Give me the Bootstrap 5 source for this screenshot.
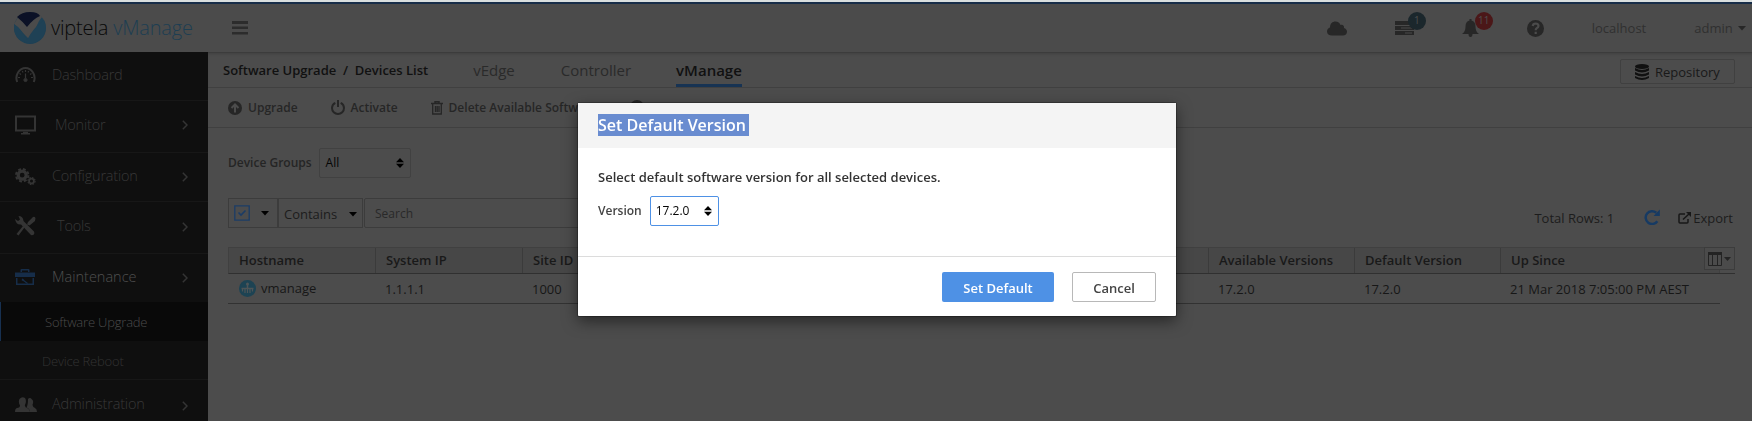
<!DOCTYPE html>
<html lang="en">
<head>
<meta charset="utf-8">
<title>viptela vManage</title>
<link href="https://cdn.jsdelivr.net/npm/bootstrap@5.3.0/dist/css/bootstrap.min.css" rel="stylesheet">
<script src="https://cdn.jsdelivr.net/npm/bootstrap@5.3.0/dist/js/bootstrap.bundle.min.js"></script>
<style>
body{font-family:"Open Sans","Noto Sans",sans-serif;font-size:13px;line-height:20px;background:#4c4c4c;color:#1c1c1c;height:421px;overflow:hidden}
svg{display:block;flex:none}
.topline{height:4px;background:#172d48;border-top:2px solid #d9dede}
.masthead{height:48px;background:#4b4b4b;padding-left:14px;color:#2a2a2a}
.wordmark{font-size:20px;font-weight:300;letter-spacing:-.18px;line-height:28px;margin-left:5px;color:#080808}
.wordmark span{color:#1d3e52}
.burger{margin-left:39px}
.bubble{position:absolute;width:18px;height:18px;border-radius:50%;color:#4e4e4e;font-size:10px;line-height:17px;text-align:center;left:13px}
.usertext{font-size:13px;color:#303030}
.sidebar{width:208px;height:369px;background:#0f0f0f;flex:none;color:#383838;font-weight:300;font-size:14.5px;letter-spacing:-.2px}
.entry{border-bottom:1px solid #171717;padding-left:15px}
.entry .label{margin-left:16px}
.entry .chev{margin-left:auto;margin-right:20px}
.sub{font-size:13px;height:39px;padding:1px 0 0 42px;color:#333}
.sub.current{background:#090909;color:#4b4b4b;border-left:1px solid #173050;padding-left:44px}
.crumbs{height:36px;border-top:1px solid #3c3c3c;border-bottom:1px solid #404040;padding-left:15px;box-shadow:inset 0 2px 3px -1px #404040}
.crumb{font-weight:600;color:#111;white-space:pre}
.tabitem{font-size:15px;color:#2a2a2a;height:34px;line-height:35px}
.tabitem.on{font-weight:600;color:#111;border-bottom:3px solid #173353}
.repo{height:25px;width:115px;border:1px solid #404040;border-radius:2px;font-size:13px;color:#191919;padding:2px 0 0 14px;gap:6px}
.tools{height:40px;border-bottom:1px solid #404040;padding-left:20px;font-weight:600;font-size:12px;color:#262626}
.pick{border:1px solid #414141;border-radius:2px;height:30px;color:#050505}
.searchbar{height:30px}
.searchbar>div{border:1px solid #3c3c3c;height:30px}
.grid-table{width:1492px;margin-left:20px}
.heads{height:27px;border:1px solid #404040;border-bottom:1px solid #303030;background:#474747;font-weight:600;color:#191919;font-size:13px}
.heads>div,.vals>div{padding-left:10px;flex:none;white-space:nowrap}
.heads>div{border-right:1px solid #3b3b3b;height:25px;line-height:25px}
.vals{height:30px;border-bottom:1px solid #323232;line-height:31px;color:#171717;font-size:13px}
.colmenu{position:absolute;right:-16px;top:-1px;width:31px;height:23px;background:#4b4b4b;border:1px solid #3c3c3c;padding-left:3px}
.headrule{position:absolute;right:-16px;bottom:-1px;width:16px;height:1px;background:#303030}
.dlg{position:fixed;left:0;top:0;width:100%;height:100%}
.dlg .modal-dialog{width:598px;max-width:598px;margin:103px 0 0 578px}
.dlg .modal-content{height:213px;border:0;border-radius:1px;background:#fff;box-shadow:0 0 0 1px rgba(0,0,0,.25),0 5px 15px rgba(0,0,0,.5)}
.dlg .modal-header{height:45px;background:#f4f4f4;border:0;border-radius:0;padding:0 20px 1px}
.dlg .modal-title{font-size:16px;font-weight:600;line-height:22px;height:22px;background:#698cd0;color:#fff;width:151px;white-space:nowrap}
.dlg .modal-body{padding:18px 20px 0;color:#333}
.dlg .modal-footer{height:60px;border-top:1px solid #dcdcdc;padding:1px 20px 0 0;gap:18px}
.dlg .modal-footer .btn{margin:0;height:30px;border-radius:2px;font-size:13px;line-height:20px;font-weight:600;padding:1px 0 0}
.go{width:112px;background:#4e91e5;color:#fff}
.stop{width:84px;border:1px solid #b8b8b8;color:#444}
</style>
</head>
<body>
<div class="topline"></div>
<header class="masthead d-flex align-items-center">
  <svg width="32" height="32" viewBox="0 0 32 32"><circle cx="16" cy="16" r="16" fill="#1f4155"/><path d="M3 7Q8 0 16 0T28 5L25 9 16 28Q9 21 0 12Z" fill="#4b4b4b"/><path d="M3 5Q8 0 16 0T26 4Q19 7 13 15Q8 9 3 5Z" fill="#0b1126"/><path d="M0 12Q7 16 13 28Q19 16 30 8Q34 18 28 26Q17 36 5 27Q-1 21 0 12Z" fill="#1f4155"/></svg>
  <div class="wordmark">viptela <span>vManage</span></div>
  <svg class="burger" width="16" height="14" fill="#2c2c2c"><path d="M0 0h16v3H0zM0 5.500h16v2.600H0zM0 11h16v2.600H0z"/></svg>
  <svg style="margin-left:1079px" width="20" height="15" viewBox="0 0 20 15" fill="#272727"><path d="M5 14.500C2 14.500 0 13 0 10.500 0 8.500 1.300 7 3 6.500 3 2.500 5.500.5 8.500.5c2.500 0 4.300 1.200 5 3.500 2.300-.7 4 1 3.500 3 1.800.5 3 2 3 3.800 0 2.200-1.700 3.700-4 3.700z"/></svg>
  <div class="position-relative" style="margin-left:48px"><svg width="19" height="14" fill="#272727" fill-rule="evenodd"><path d="M0 0h19v4H0zM0 5h19v4H0zm6 1.500v1h11v-1zM0 10h19v4H0zm10 1.500v1h7v-1z"/></svg><span class="bubble" style="background:#1b272c;top:-9px">1</span></div>
  <div class="position-relative" style="margin-left:48px"><svg width="17" height="18" viewBox="0 0 17 18" fill="#272727"><path d="M7.500 0h2v1.500Q13.500 2.500 13.500 7.500 13.500 13 17 15H10.500Q10.500 18 8.500 18T6.500 15H0Q3.500 13 3.500 7.500 3.500 2.500 7.500 1.500z"/></svg><span class="bubble" style="background:#4b1718;top:-7px">11</span></div>
  <svg style="margin-left:48px" width="17" height="17" viewBox="0 0 17 17"><circle cx="8.500" cy="8.500" r="8.500" fill="#272727"/><path d="M5.700 6Q6 3.500 8.700 3.500 11.500 3.700 11.500 6 11.500 7.300 9.700 8.200 8.700 8.800 8.700 10.200M8.700 11.700V13.900" fill="none" stroke="#4b4b4b" stroke-width="2.200"/></svg>
  <span class="usertext" style="margin-left:48px">localhost</span>
  <span class="usertext" style="margin-left:48px">admin</span>
  <svg style="margin-left:5px" width="8" height="5"><path d="M0 0h8L4 4.500z" fill="#272727"/></svg>
</header>
<div class="d-flex">
<nav class="sidebar">
  <div class="entry d-flex align-items-center" style="height:49px;padding-bottom:3px"><svg width="21" height="16" viewBox="0 0 21 16" fill="none" stroke="#343434"><path d="M2.200 15Q.2 10 3 5.500 6 1 10.500 1T18 5.500Q20.800 10 18.800 15" stroke-width="2"/><path d="M5 10.500h-2M6 7.500L4.500 6.500M8 5.500L7.300 4M10.500 5V3M13 5.500L13.700 4M15 7.500l1.500-1M16 10.500h2" stroke-width="1.200"/><path d="M10.500 6.500v5" stroke-width="1.300"/><circle cx="10.500" cy="13" r="1.600" fill="#343434"/></svg><span class="label">Dashboard</span></div>
  <div class="entry d-flex align-items-center" style="height:52px;padding-bottom:4px"><svg width="21" height="20" fill="none" stroke="#343434"><path d="M1 1.500h19v14H1z" stroke-width="2"/><path d="M6 18.800h9M8 17.500h5" stroke-width="1.500"/></svg><span class="label" style="margin-left:19px">Monitor</span><svg class="chev" width="6" height="10"><path d="M.8.8L5 5 .8 9.200" fill="none" stroke="#343434" stroke-width="1.500"/></svg></div>
  <div class="entry d-flex align-items-center" style="height:49px"><svg width="21" height="18" viewBox="0 0 21 18" fill="none" stroke="#343434"><circle cx="7.200" cy="7.200" r="4" stroke-width="3.200"/><circle cx="7.200" cy="7.200" r="6.200" stroke-width="2" stroke-dasharray="2.870 2"/><circle cx="16.500" cy="13" r="2.400" stroke-width="1.800"/><circle cx="16.500" cy="13" r="3.600" stroke-width="1.100" stroke-dasharray="1.600 1.227"/></svg><span class="label" style="margin-top:-3px">Configuration</span><svg class="chev" width="6" height="10"><path d="M.8.8L5 5 .8 9.200" fill="none" stroke="#343434" stroke-width="1.500"/></svg></div>
  <div class="entry d-flex align-items-center" style="height:52px;padding-bottom:4px"><svg width="21" height="20" viewBox="0 0 21 20" fill="#343434"><path d="M0 3L3 5 5 3.500 3.500 0Q8 0 8.500 5L19 15.500Q20 18 18 19 16 19.500 15.500 18.500L6 8.500Q1 9 0 3z"/><path d="M13 6L18 1Q19.500 0 20.500 2L20 5 14.500 9.500 12 8.500zM9.500 11.500L3.500 19.500 1.500 18 8 10z"/></svg><span class="label" style="margin-left:21px">Tools</span><svg class="chev" width="6" height="10" style="margin-top:3px"><path d="M.8.8L5 5 .8 9.200" fill="none" stroke="#343434" stroke-width="1.500"/></svg></div>
  <div class="d-flex align-items-center" style="height:48px;padding:0 0 2px 15px;color:#505050"><svg width="20" height="16" viewBox="0 0 20 16" fill="#162d49"><path d="M5.500 3V1q0-1 1-1h7q1 0 1 1v2h-1.500V1.500h-6V3zM0 3.500h20V8H0z"/><path d="M1 9h1.500v5.500h15V9H19v7H1z"/><path d="M7 9.500l1.500.5.500 1 4 3-.8.9-4-2.900-1.500-.5z"/></svg><span style="margin-left:17px;letter-spacing:0">Maintenance</span><svg style="margin:2px 20px 0 auto" width="6" height="10"><path d="M.8.8L5 5 .8 9.200" fill="none" stroke="#343434" stroke-width="1.500"/></svg></div>
  <div class="sub current d-flex align-items-center">Software Upgrade</div>
  <div class="sub d-flex align-items-center" style="border-bottom:1px solid #171717">Device Reboot</div>
  <div class="d-flex align-items-center" style="height:48px;padding-left:15px"><svg width="22" height="15" viewBox="0 0 22 15" fill="#343434"><path d="M13 2Q15 0 17 2.500 19 3.500 17.500 8 18 10.500 20 11 22 12 22 15H15Q15 12 11.500 10.500 13 8 13 2z"/><path d="M0 15Q0 11.500 2 11 5 10.500 5 8.500 3 5 4.500 2 7-1 10 1 12 4 9.800 8.500 10 10.500 13 11.500 15 12.500 15 15z"/></svg><span style="margin-left:15px">Administration</span><svg style="margin:3px 20px 0 auto" width="6" height="10"><path d="M.8.8L5 5 .8 9.200" fill="none" stroke="#343434" stroke-width="1.500"/></svg></div>
</nav>
<main class="flex-grow-1">
  <div class="crumbs d-flex align-items-center">
    <span class="crumb">Software Upgrade  /  Devices List</span>
    <span class="tabitem" style="margin-left:45px">vEdge</span>
    <span class="tabitem" style="margin-left:46px">Controller</span>
    <span class="tabitem on" style="margin-left:45px">vManage</span>
    <div class="repo d-flex align-items-center ms-auto" style="margin-right:17px;margin-top:2px"><svg width="14" height="16" viewBox="0 0 14 16" fill="#111"><ellipse cx="7" cy="2.500" rx="7" ry="2.500"/><path d="M0 4Q7 8 14 4v2.500q-7 4-14 0zM0 8q7 4 14 0v2.500q-7 4-14 0zM0 12q7 4 14 0v2q-7 4-14 0z"/></svg><span>Repository</span></div>
  </div>
  <div class="tools d-flex align-items-center">
    <svg width="14" height="14" viewBox="0 0 14 14"><circle cx="7" cy="7" r="7" fill="#262626"/><path d="M7 11.500V4M3.500 7L7 3.500 10.500 7" fill="none" stroke="#4c4c4c" stroke-width="2"/></svg><span style="margin-left:6px">Upgrade</span>
    <svg style="margin-left:33px" width="14" height="15" viewBox="0 0 14 15" fill="none" stroke="#262626" stroke-width="2"><path d="M4.300 2.800Q1 4.500 1 8a6 6 0 0 0 12 0Q13 4.500 9.700 2.800M7 0v7"/></svg><span style="margin-left:6px">Activate</span>
    <svg style="margin-left:33px" width="12" height="14" viewBox="0 0 12 14" fill="none" stroke="#262626"><path d="M0 2.500h12M4 2V.8h4V2" stroke-width="1.500"/><path d="M1.700 3v10h8.600V3M4.500 5v6M6.200 5v6M8 5v6" stroke-width="1.300"/></svg><span style="margin-left:6px">Delete Available Software</span>
    <svg style="margin-left:33px;margin-top:-2px" width="14" height="14"><circle cx="7" cy="7" r="7" fill="#262626"/></svg>
  </div>
  <div class="d-flex align-items-center" style="padding:20px 0 0 20px;height:50px;font-size:12px;font-weight:600;color:#252525">
    <span>Device Groups</span>
    <div class="pick d-flex align-items-center justify-content-between fw-normal" style="width:92px;margin-left:7px;padding:0 6px"><span>All</span><svg width="8" height="10"><path d="M4 0l4 4.300H0zM4 10l4-4.300H0z"/></svg></div>
  </div>
  <div class="d-flex align-items-start" style="margin:20px 0 0 20px;height:34px">
    <div class="searchbar d-flex">
      <div class="d-flex align-items-center" style="width:50px;padding-left:5px;padding-right:8px"><svg width="16" height="16" fill="none" stroke="#1b3c66"><path d="M.8.800h14.400v14.400H.8z" stroke-width="1.300"/><path d="M4.500 7.500L7 10 11.500 5.500" stroke-width="1.600"/></svg><svg class="ms-auto" width="8" height="5"><path d="M0 0h8L4 4.500z"/></svg></div>
      <div class="d-flex align-items-center" style="width:85px;padding:2px 5px 0;font-size:13px"><span>Contains</span><svg class="ms-auto" width="8" height="5"><path d="M0 0h8L4 4.500z"/></svg></div>
      <div style="width:690px;padding:5px 0 0 10px;font-size:12px;margin-left:1px;border-radius:2px;color:#292929">Search</div>
    </div>
    <div class="d-flex align-items-center ms-auto" style="height:34px;padding-top:6px;margin-right:19px"><span style="font-size:13px">Total Rows: 1</span><svg style="margin-left:30px;margin-top:-3px" width="16" height="16" viewBox="0 0 15 15"><path d="M12.500 11.500A6 6 0 1 1 11.500 3.500" fill="none" stroke="#163a63" stroke-width="2.300"/><path d="M14.800.5v6H9z" fill="#163a63"/></svg><svg style="margin-left:18px" width="13" height="12" viewBox="0 0 13 12" fill="none" stroke="#171717"><path d="M7 2H2Q1 2 1 3v7q0 1 1 1h7q1 0 1-1V7M5 7.500L11 2" stroke-width="1.500"/><path d="M8 0h5v5z" fill="#171717" stroke="none"/></svg><span style="font-size:13px;margin-left:2px">Export</span></div>
  </div>
  <div class="grid-table">
    <div class="heads d-flex position-relative" style="margin-top:15px">
      <div style="width:147px">Hostname</div><div style="width:147px">System IP</div><div style="width:146px">Site ID</div><div style="width:146px">Device Model</div><div style="width:146px">Reachability</div><div style="width:248px">Current Version</div><div style="width:146px">Available Versions</div><div style="width:146px">Default Version</div><div style="border:0">Up Since</div>
      <span class="headrule"></span>
      <span class="colmenu d-flex align-items-center"><svg width="14" height="14" fill="none" stroke="#232323"><path d="M.5.5h13v13H.5zM4.500 2v11M9.500 2v11"/><path d="M0 1.500h14" stroke-width="3"/></svg><svg style="margin-left:2px" width="7" height="4"><path d="M0 0h7L3.500 4z" fill="#232323"/></svg></span>
    </div>
    <div class="vals d-flex">
      <div class="d-flex align-items-center" style="width:147px;gap:5px;padding-left:11px"><svg width="17" height="17" viewBox="0 0 17 17"><circle cx="8.500" cy="8.500" r="8.500" fill="#1d4353"/><path d="M2.500 8.500h12M8.500 4v4" stroke="#4e5557" stroke-width="1.500"/><path d="M3.500 8.500v3M6 8.500v4.500M8.500 8.500v4.500M11 8.500v4.500M13.500 8.500v3" stroke="#4e5557" stroke-width="1.200"/><circle cx="8.500" cy="4" r="1.500" fill="#4e5557"/></svg>vmanage</div><div style="width:147px">1.1.1.1</div><div style="width:686px">1000</div><div style="width:146px">17.2.0</div><div style="width:146px">17.2.0</div><div>21 Mar 2018 7:05:00 PM AEST</div>
    </div>
  </div>
</main>
</div>
<div class="dlg">
  <div class="modal-dialog"><div class="modal-content">
    <div class="modal-header d-flex align-items-center"><div class="modal-title">Set Default Version</div></div>
    <div class="modal-body">
      <div style="font-weight:600;line-height:22px">Select default software version for all selected devices.</div>
      <div class="d-flex align-items-center" style="margin-top:8px;font-size:12px"><span style="font-weight:600;color:#444">Version</span><div class="pick d-flex align-items-center justify-content-between" style="width:69px;margin-left:8px;padding:0 6px 0 5px;border-color:#4e91e5"><span>17.2.0</span><svg width="8" height="10"><path d="M4 0l4 4.300H0zM4 10l4-4.300H0z"/></svg></div></div>
    </div>
    <div class="modal-footer d-flex justify-content-end"><button class="btn go">Set Default</button><button class="btn stop">Cancel</button></div>
  </div></div>
</div>
</body>
</html>
